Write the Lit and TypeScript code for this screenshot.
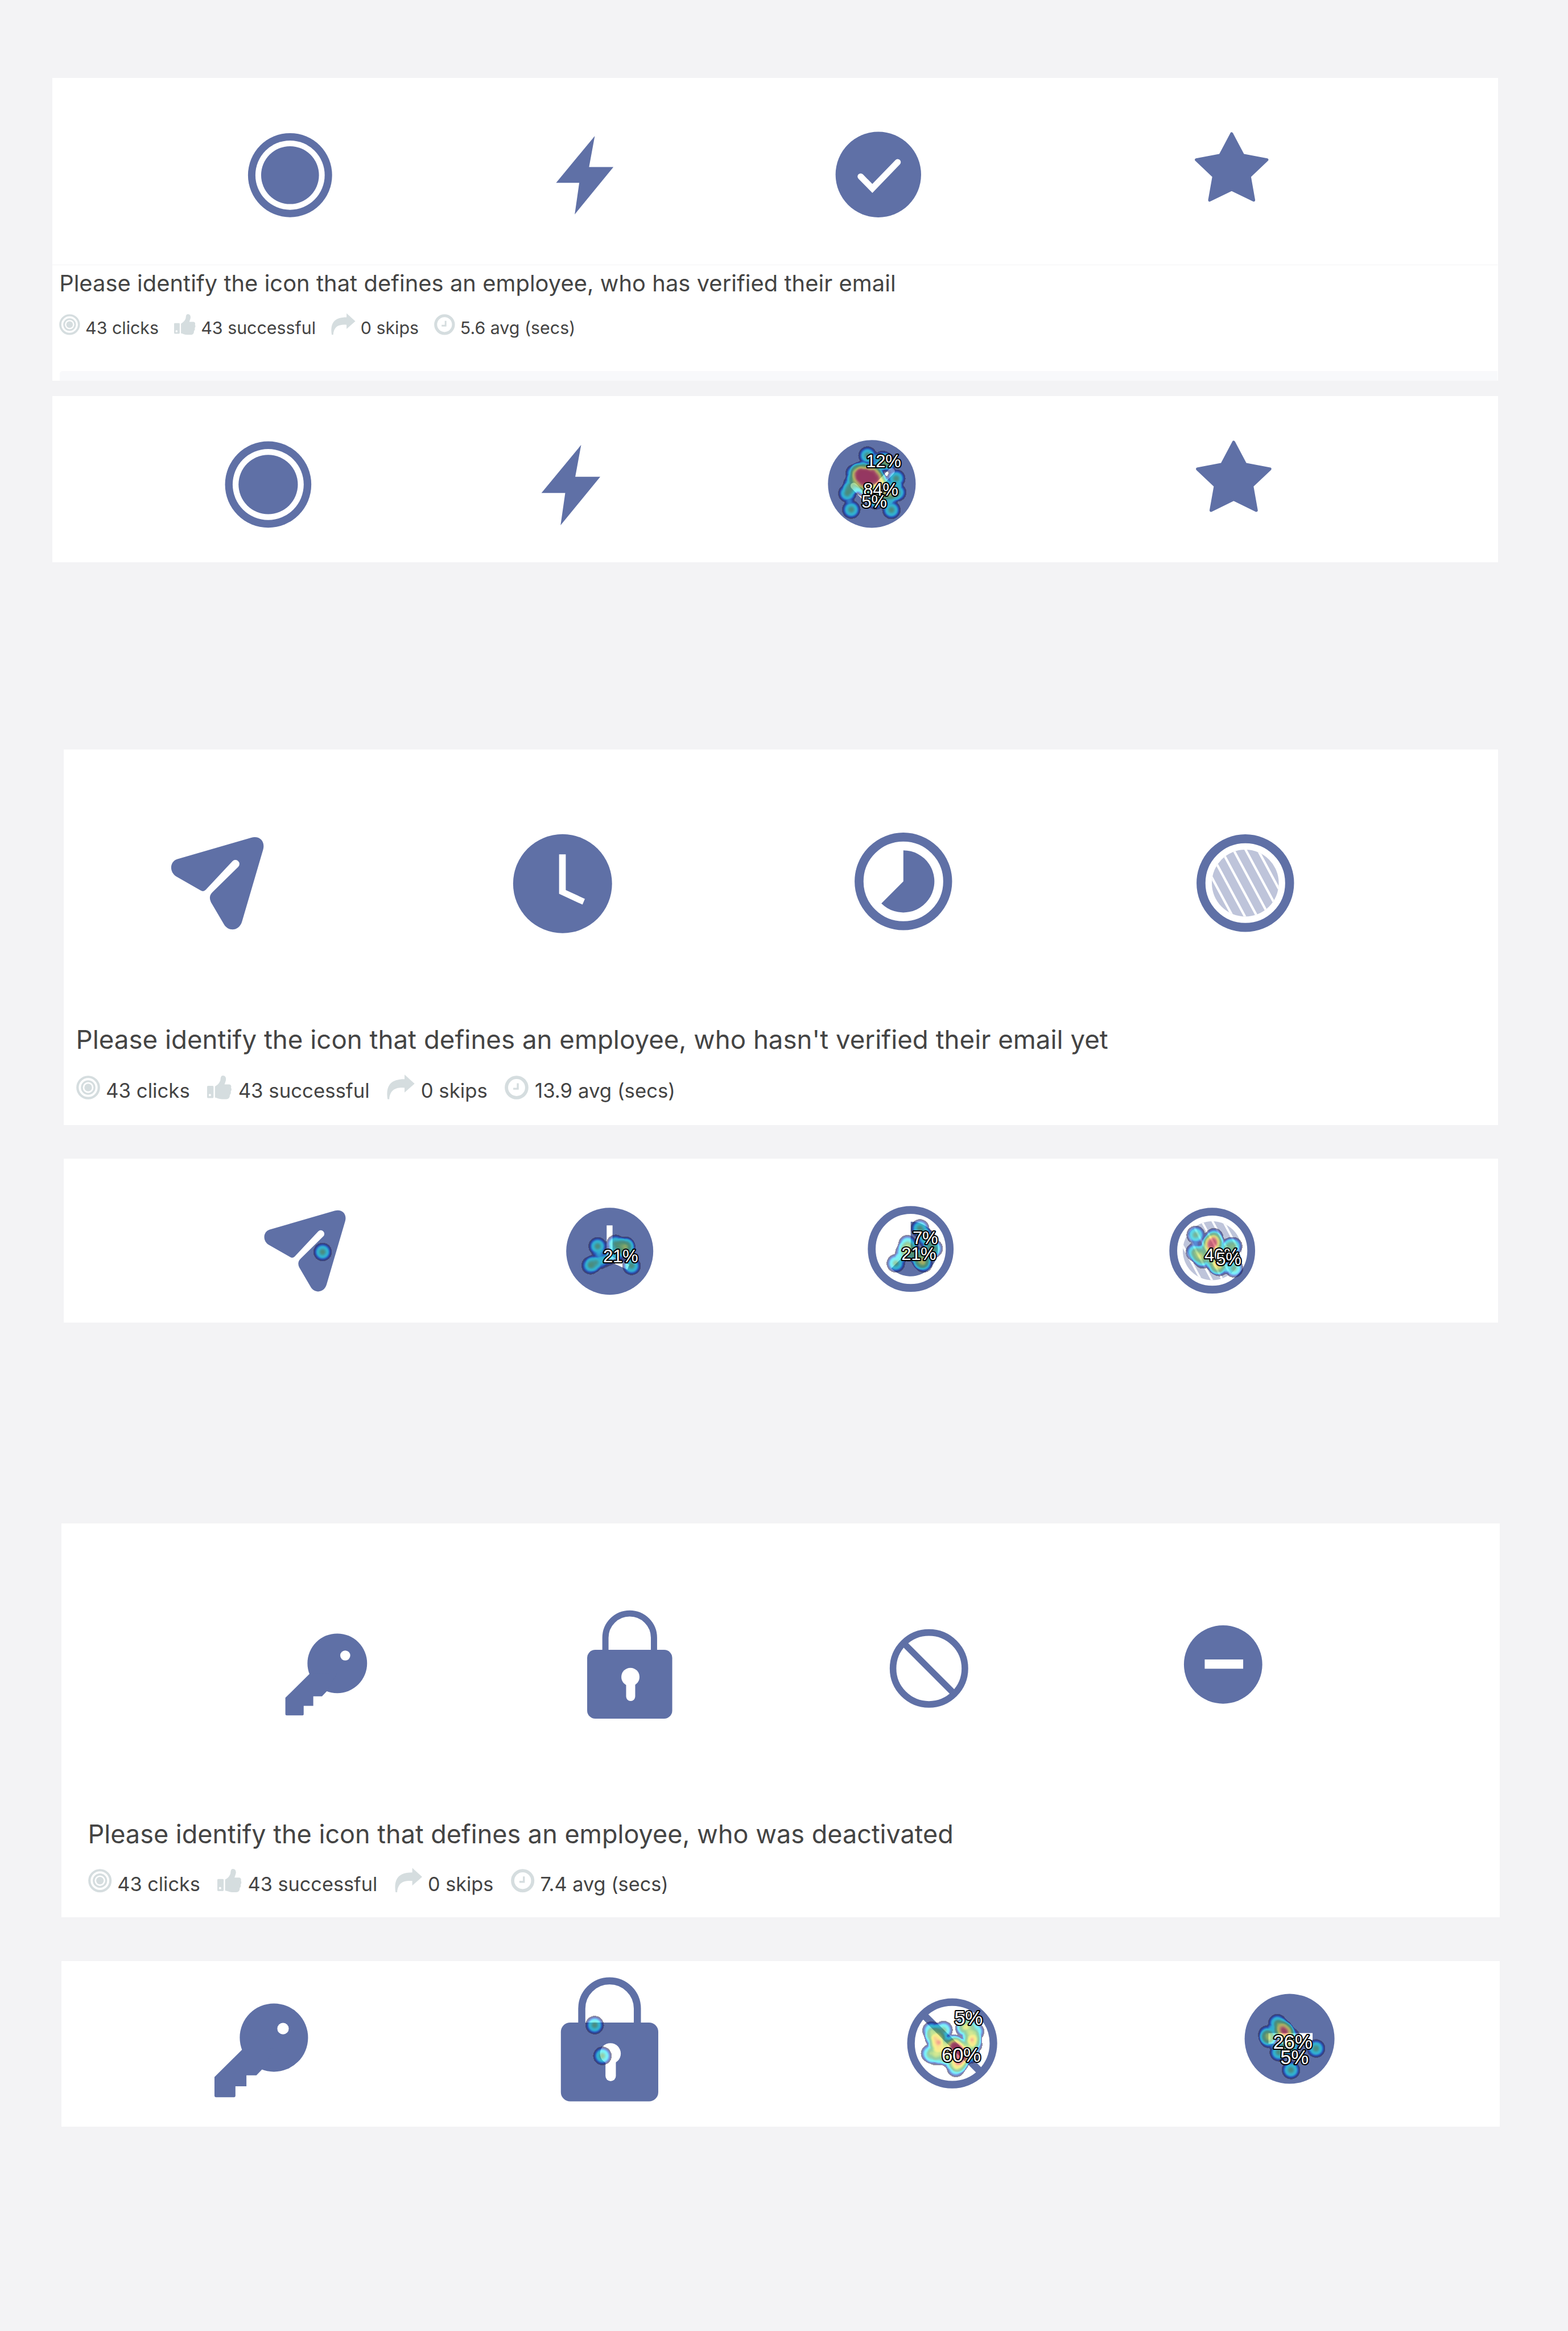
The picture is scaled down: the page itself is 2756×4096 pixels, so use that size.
import { LitElement, html, svg, css, nothing, unsafeCSS } from "lit";
import { customElement, property } from "lit/decorators.js";

// Every length is given in design units; one unit is U CSS pixels.
const U = 2756 / 3281;
const px = (n: number) => `${(n * U).toFixed(2)}px`;
const u = (n: number) => unsafeCSS(px(n));

const BLUE = "#5f70a6";

/* Icon artwork, each centred on 0,0 inside a -120..120 box. */
const ICONS = {
  disc: svg`<circle r="88" fill=${BLUE}/><circle r="72.5" fill="#fff"/><circle r="60.5" fill=${BLUE}/>`,
  bolt: svg`<path fill=${BLUE} d="M21 -82 L9 -17 H60 L-21 82 L-11.5 16 H-60 Z"/>`,
  check: svg`<circle r="89.5" fill=${BLUE}/>
    <path d="M-37 4 L-12.5 29 L40.5 -26" fill="none" stroke="#fff" stroke-width="13" stroke-linecap="round"/>`,
  star: svg`<path fill=${BLUE} stroke=${BLUE} stroke-width="6" stroke-linejoin="round"
    d="M0 -70 L23.8 -25 L74 -15.5 L37.4 19.3 L46.2 69 L0 46.6 L-46.2 69 L-37.4 19.3 L-74 -15.5 L-23.8 -25 Z"/>`,
  plane: svg`<path fill=${BLUE} d="M-84 -50 L71 -95 C88 -100 101 -88 96 -70 L52 80 C46 101 23 102 14 86 L-13 40 Q-19 28 -10 19 L44 -34 A8 8 0 0 0 32 -46 L-24 14 Q-29 19 -35 15 L-86 -14 C-101 -24 -99 -45 -84 -50 Z"/>`,
  clock: svg`<circle r="103.5" fill=${BLUE}/>
    <path fill="#fff" d="M-7.3 -61.5 H6.7 V13.3 L46.7 31.8 L41.7 43.8 L-7.3 21 Z"/>`,
  progress: svg`<circle r="92.7" fill="#fff" stroke=${BLUE} stroke-width="18.6"/>
    <path fill=${BLUE} d="M0 0 V-65 A65 65 0 1 1 -46 46 Z"/>`,
  stripes: svg`<clipPath id="stripe-disc"><circle r="70"/></clipPath>
    <circle r="92.7" fill="#fff" stroke=${BLUE} stroke-width="18.6"/>
    <circle r="70" fill="#bec4da"/>
    <g clip-path="url(#stripe-disc)" stroke="#fff" stroke-width="5">
      ${[-63.75, -38.25, -12.75, 12.75, 38.25, 63.75].map(
        (x) => svg`<path d="M${x - 43} -80 L${x + 43} 80"/>`
      )}
    </g>`,
  key: svg`<circle r="62.4" fill=${BLUE}/>
    <path fill=${BLUE} d="M-58 22 L-108.6 72 V106 Q-108.6 109 -105.6 109 H-72.5 Q-70.3 109 -70.3 106.5 V89 H-50.2 V69 H-32 L-21.5 58 L0 20 Z"/>
    <circle cx="16.7" cy="-16.4" r="10.5" fill="#fff"/>`,
  lock: svg`<path fill="none" stroke=${BLUE} stroke-width="13" d="M-50.8 -28 V-56 A50.8 50.8 0 0 1 50.8 -56 V-28"/>
    <rect x="-89" y="-30.6" width="178" height="144" rx="17" fill=${BLUE}/>
    <circle cx="1.5" cy="26" r="19" fill="#fff"/>
    <path stroke="#fff" stroke-width="19" stroke-linecap="round" d="M2 30 V67"/>`,
  ban: svg`<circle r="75.2" fill="none" stroke=${BLUE} stroke-width="13.8"/>
    <path stroke=${BLUE} stroke-width="13.4" d="M-52 -52 L52 52"/>`,
  minus: svg`<circle r="82" fill=${BLUE}/><path fill="#fff" d="M-38.5 -10.5 H42 V9 H-38.5 Z"/>`,
};

type IconName = keyof typeof ICONS;
type Point = [x: number, y: number, weight?: number];
interface Label { text: string; x: number; y: number; size?: number }
interface Item {
  icon: IconName;
  cx: number;
  cy: number;
  scale?: number;
  clicks?: Point[];
  labels?: Label[];
}

/* Click density -> colour ramp, 21 steps from 0 to 1. */
const RAMP: [number, number, number][] = [
  [60, 50, 65], [60, 50, 65], [0, 15, 125], [0, 95, 215], [5, 215, 250],
  [15, 235, 235], [30, 205, 180], [50, 175, 120], [57, 165, 86], [75, 175, 75],
  [120, 195, 60], [180, 215, 50], [235, 225, 45], [245, 215, 45], [245, 175, 50],
  [235, 110, 50], [215, 40, 45], [200, 15, 35], [195, 5, 35], [195, 5, 40], [200, 20, 60],
];
const channel = (i: number) => RAMP.map((c) => (c[i] / 255).toFixed(3)).join(" ");
const ALPHA = ["0", ...Array(20).fill("0.54")].join(" ");

@customElement("heat-icon")
class HeatIcon extends LitElement {
  static styles = css`
    :host { display: block; flex: none; }
    .art { display: block; overflow: visible; }
    .pct {
      font-family: "Liberation Sans", Arial, sans-serif;
      letter-spacing: -0.4px;
      fill: #fff;
      stroke: #000;
      stroke-width: 5px;
      stroke-linejoin: round;
      paint-order: stroke;
    }
  `;
  @property({ attribute: false }) item!: Item;

  private heat(clicks: Point[]) {
    // A weight above 1 stacks whole spots, the remainder is a fainter one.
    const spots = clicks.flatMap(([x, y, w = 1]) =>
      Array.from({ length: Math.ceil(w) }, (_, i) => ({ x, y, o: Math.min(1, w - i) }))
    );
    return svg`
      <defs>
        <radialGradient id="spot">
          <stop offset="0" stop-color="#000" stop-opacity="0.4"/>
          <stop offset="0.12" stop-color="#000" stop-opacity="0.37"/>
          <stop offset="1" stop-color="#000" stop-opacity="0"/>
        </radialGradient>
        <filter id="ramp" filterUnits="userSpaceOnUse" x="-200" y="-200" width="400" height="400"
          color-interpolation-filters="sRGB">
          <feColorMatrix in="SourceGraphic" result="level"
            values="0 0 0 1 0  0 0 0 1 0  0 0 0 1 0  0 0 0 0 1"/>
          <feComponentTransfer in="level" result="colour">
            <feFuncR type="table" tableValues=${channel(0)}/>
            <feFuncG type="table" tableValues=${channel(1)}/>
            <feFuncB type="table" tableValues=${channel(2)}/>
          </feComponentTransfer>
          <feComponentTransfer in="SourceGraphic" result="mask">
            <feFuncA type="discrete" tableValues=${ALPHA}/>
          </feComponentTransfer>
          <feComposite in="colour" in2="mask" operator="in"/>
        </filter>
      </defs>
      <g filter="url(#ramp)">
        ${spots.map(({ x, y, o }) => svg`<circle cx=${x - this.item.cx} cy=${y - this.item.cy} r="22"
          fill="url(#spot)" fill-opacity=${o}/>`)}
      </g>`;
  }

  render() {
    const { icon, cx, cy, scale = 1, clicks, labels = [] } = this.item;
    const side = 240 * scale;
    return html`<svg class="art" width=${side * U} height=${side * U}
      viewBox="${-side / 2} ${-side / 2} ${side} ${side}">
      <g transform="scale(${scale})">${ICONS[icon]}</g>
      ${clicks ? this.heat(clicks) : nothing}
      ${labels.map((l) => svg`<text class="pct" x=${l.x - cx} y=${l.y - cy} font-size=${l.size ?? 37}>${l.text}</text>`)}
    </svg>`;
  }
}

/* A row of icons in flow: each gap is the distance from the previous icon's box. */
@customElement("icon-row")
class IconRow extends LitElement {
  static styles = css`
    :host { display: flex; align-items: flex-start; box-sizing: border-box; }
  `;
  @property({ attribute: false }) items: Item[] = [];
  @property({ attribute: false }) origin: [number, number] = [0, 0];

  render() {
    let edge = this.origin[0];
    return this.items.map((item) => {
      const half = 120 * (item.scale ?? 1);
      const gap = item.cx - half - edge;
      const drop = item.cy - half - this.origin[1];
      edge = item.cx + half;
      return html`<heat-icon .item=${item} style="margin:${px(drop)} 0 0 ${px(gap)}"></heat-icon>`;
    });
  }
}

const GREY = "#d5dddf";
const STAT_ICONS = {
  clicks: svg`<g fill="none" stroke=${GREY}><circle cx="25" cy="25" r="22.3" stroke-width="5"/>
    <circle cx="25" cy="25" r="13.2" stroke-width="4"/></g><circle cx="25" cy="25" r="8" fill=${GREY}/>`,
  thumb: svg`<g fill=${GREY}><path fill-rule="evenodd" d="M2 21.5 H11.5 Q13.5 21.5 13.5 23.5 V45 Q13.5 47 11.5 47 H2 Q0 47 0 45 V23.5 Q0 21.5 2 21.5 Z M5.8 38.5 a2.4 2.4 0 1 0 .1 0 Z"/>
    <path d="M16.5 24 Q16.5 21.5 19 21 C23 19 27 14 28 9 C28.5 4 29 0 33 0 C39 0 40.5 6 39 11 L36.5 18.5 H46 C50 18.5 51.5 22.5 50 25.5 C52 28 51 31.5 49.5 33 C50.5 36 49.5 39 47.5 40.5 C48 44.5 46 49.5 40 49.5 H31 C25 49.5 21 46.5 16.5 46 Z"/></g>`,
  skip: svg`<path fill=${GREY} d="M1.5 51.5 C-3 22 9 9.5 37 9.5 V0 L58 19 L37 37.5 V27.5 C19 26 6.5 31 5 51.5 Z"/>`,
  time: svg`<g fill="none" stroke=${GREY}><circle cx="25" cy="25" r="21.3" stroke-width="7"/>
    <path stroke-width="4" d="M27.5 16 V27.5 H18"/></g>`,
};
const stat = (name: keyof typeof STAT_ICONS, text: string, w = 50, top = 0) => ({ name, text, w, top });

@customElement("stat-line")
class StatLine extends LitElement {
  static styles = css`
    :host { display: flex; align-items: flex-start; gap: 0.87em; white-space: nowrap; }
    .stat { display: flex; align-items: flex-start; gap: 0.3em; }
    .glyph { display: block; height: 1.19em; flex: none; overflow: visible; }
    .label { font-size: 0.985em; line-height: 1.2em; padding-top: 0.19em; }
  `;
  @property() average = "";
  render() {
    const stats = [
      stat("clicks", "43 clicks"),
      stat("thumb", "43 successful", 52),
      stat("skip", "0 skips", 58, -2),
      stat("time", `${this.average} avg (secs)`),
    ];
    return stats.map((s) => html`<div class="stat">
      <svg class="glyph" viewBox="0 ${-s.top} ${s.w} 50">${STAT_ICONS[s.name]}</svg>
      <span class="label">${s.text}</span>
    </div>`);
  }
}

const VERIFIED: Item[] = [
  { icon: "disc", cx: 606.8, cy: 366 },
  { icon: "bolt", cx: 1223.5, cy: 366.6 },
  { icon: "check", cx: 1838, cy: 364.8 },
  { icon: "star", cx: 2577.1, cy: 350 },
];
const VERIFIED_HEAT: Item[] = [
  { icon: "disc", cx: 561, cy: 1013.9, scale: 1.0255 },
  { icon: "bolt", cx: 1194, cy: 1014.5, scale: 1.0255 },
  {
    icon: "check", cx: 1824, cy: 1012.3, scale: 1.0255,
    clicks: [
      [1781, 1066], [1865, 1066.7], [1815, 953], [1847, 962], [1857, 968], [1875, 1001], [1877, 1030], [1864, 1033, 0.7],
      [1772.7, 1032], [1783, 1013], [1788, 990], [1800, 986, 2], [1803, 1000, 2], [1811, 1005, 2], [1823, 993, 2],
      [1832, 1001, 2], [1817, 1013], [1839, 1009, 1.5], [1849, 1023, 1.5], [1853, 1036], [1833, 1027], [1811, 990, 2],
      [1832, 1047], [1797, 1000], [1829, 985], [1808, 1020],
    ],
    labels: [
      { text: "12%", x: 1812, y: 977 },
      { text: "84%", x: 1806, y: 1037 },
      { text: "5%", x: 1802.5, y: 1062 },
    ],
  },
  { icon: "star", cx: 2582, cy: 997.5, scale: 1.0255 },
];
const UNVERIFIED: Item[] = [
  { icon: "plane", cx: 455, cy: 1848 },
  { icon: "clock", cx: 1177.3, cy: 1848.7 },
  { icon: "progress", cx: 1890.3, cy: 1844 },
  { icon: "stripes", cx: 2605.2, cy: 1847 },
];
const UNVERIFIED_HEAT: Item[] = [
  { icon: "plane", cx: 637.2, cy: 2616.8, scale: 0.88, clicks: [[674.5, 2619.5]] },
  {
    icon: "clock", cx: 1275.3, cy: 2617.4, scale: 0.88,
    clicks: [
      [1250, 2607], [1287.7, 2602], [1309, 2606], [1309, 2611, 0.6], [1235, 2647, 0.9], [1247, 2640, 0.5],
      [1263.5, 2635, 0.5], [1282, 2627, 0.5], [1321, 2648], [1300, 2620, 0.4],
    ],
    labels: [{ text: "21%", x: 1261.5, y: 2640.5 }],
  },
  {
    icon: "progress", cx: 1905.1, cy: 2613, scale: 0.88,
    clicks: [
      [1924.5, 2570], [1938, 2590], [1953, 2612], [1898.5, 2603], [1892, 2620], [1874, 2643],
      [1907.5, 2620], [1926, 2635, 1.4], [1932, 2643], [1944, 2618, 0.6],
    ],
    labels: [
      { text: "7%", x: 1909, y: 2603 },
      { text: "21%", x: 1885.5, y: 2636.5 },
    ],
  },
  {
    icon: "stripes", cx: 2536.2, cy: 2616, scale: 0.88,
    clicks: [
      [2501.7, 2583], [2540, 2588], [2535, 2604, 2], [2530, 2608], [2539, 2598, 2], [2500, 2619], [2511.7, 2627],
      [2517, 2635, 0.8], [2545, 2645, 1.5], [2551, 2650], [2580, 2606.7], [2568, 2608, 0.6], [2581.7, 2653],
      [2540, 2628], [2558, 2623, 0.6],
    ],
    labels: [
      { text: "40%", x: 2520, y: 2638 },
      { text: "5%", x: 2544, y: 2646.5 },
    ],
  },
];
const DEACTIVATED: Item[] = [
  { icon: "key", cx: 706, cy: 3479.5 },
  { icon: "lock", cx: 1317.8, cy: 3482.3 },
  { icon: "ban", cx: 1944.3, cy: 3490.6 },
  { icon: "minus", cx: 2559.5, cy: 3481.8 },
];
const DEACTIVATED_HEAT: Item[] = [
  { icon: "key", cx: 572.9, cy: 4262.6, scale: 1.145 },
  { icon: "lock", cx: 1275.1, cy: 4265.6, scale: 1.145, clicks: [[1243.9, 4236], [1260, 4300.3]] },
  {
    icon: "ban", cx: 1992.2, cy: 4274.8, scale: 1.147,
    clicks: [
      [1949, 4248], [1955, 4263, 1.5], [1965, 4273, 2], [1974, 4247], [1946, 4296], [1962, 4285], [1971, 4300],
      [1985, 4288], [1996, 4277, 2], [2002, 4283, 2], [2000, 4292], [2012.6, 4293, 2], [2010, 4300, 2],
      [2033, 4267, 2], [2036, 4277], [2022, 4237], [2018, 4243], [2040, 4250], [2000, 4326], [2006, 4315, 2],
      [2012, 4306], [2030, 4298], [1988, 4308], [1957, 4303, 0.6],
    ],
    labels: [
      { text: "5%", x: 1996.5, y: 4236.5, size: 41.5 },
      { text: "60%", x: 1970, y: 4313, size: 41.5 },
    ],
  },
  {
    icon: "minus", cx: 2698.6, cy: 4264.8, scale: 1.147,
    clicks: [
      [2673, 4232], [2684, 4243], [2687, 4249, 2], [2690, 4252], [2652, 4256], [2655, 4265], [2676, 4293], [2698, 4277],
      [2696, 4280], [2754, 4285], [2701.5, 4330], [2702, 4260, 0.7],
    ],
    labels: [
      { text: "26%", x: 2664, y: 4286, size: 41.5 },
      { text: "5%", x: 2679, y: 4318, size: 41.5 },
    ],
  },
];

@customElement("app-root")
class AppRoot extends LitElement {
  static styles = css`
    :host {
      display: flex; flex-direction: column; align-items: flex-start; box-sizing: border-box;
      width: 100vw; height: 100vh; overflow: hidden;
      padding-top: ${u(163)};
      background: #f3f3f5; color: #444;
      font-family: Inter, Roboto, sans-serif;
    }
    .panel { background: #fff; flex: none; overflow: hidden; }
    .first { margin-left: ${u(110)}; width: ${u(3024)}; font-size: ${u(36.7)}; }
    .second { margin-left: ${u(133)}; width: ${u(3001)}; font-size: ${u(42)}; }
    .third { margin-left: ${u(129)}; width: ${u(3009)}; font-size: ${u(41.4)}; }
    .question { margin: 0; font-size: 1.294em; line-height: 1.197em; font-weight: 400; white-space: nowrap; }

    .first .icons { height: ${u(391)}; }
    .first.task { height: ${u(634)}; display: flex; flex-direction: column; }
    .first .body { border-top: ${u(2)} solid #f4f4f6; margin-right: ${u(1)}; padding: ${u(9)} 0 0 ${u(14)}; height: ${u(221)}; box-sizing: border-box; }
    .first .question { letter-spacing: 0.001em; }
    .first .stats { margin-top: ${u(36.5)}; }
    .strip { height: ${u(21)}; margin: auto ${u(1)} 0 ${u(15)}; background: #f8f9fb; border-radius: ${u(6)} 0 0 0; }
    .first.heat { height: ${u(347.5)}; margin-top: ${u(31.5)}; }

    .second.task { height: ${u(785)}; margin-top: ${u(392.5)}; }
    .second .icons { height: ${u(575)}; }
    .second .body { padding-left: ${u(26)}; }
    .second .stats { margin-top: ${u(41)}; }
    .second.heat { height: ${u(342)}; margin-top: ${u(71)}; }

    .third.task { height: ${u(824)}; margin-top: ${u(420)}; }
    .third .icons { height: ${u(618)}; }
    .third .body { padding-left: ${u(55)}; }
    .third .stats { margin-top: ${u(41)}; }
    .third.heat { height: ${u(347)}; margin-top: ${u(92)}; }
  `;

  render() {
    return html`
      <section class="panel first task">
        <icon-row class="icons" .items=${VERIFIED} .origin=${[110, 163]}></icon-row>
        <div class="body">
          <h2 class="question">Please identify the icon that defines an employee, who has verified their email</h2>
          <stat-line class="stats" average="5.6"></stat-line>
        </div>
        <div class="strip"></div>
      </section>
      <section class="panel first heat">
        <icon-row .items=${VERIFIED_HEAT} .origin=${[110, 828.5]}></icon-row>
      </section>

      <section class="panel second task">
        <icon-row class="icons" .items=${UNVERIFIED} .origin=${[133, 1568.5]}></icon-row>
        <div class="body">
          <h2 class="question">Please identify the icon that defines an employee, who hasn't verified their email yet</h2>
          <stat-line class="stats" average="13.9"></stat-line>
        </div>
      </section>
      <section class="panel second heat">
        <icon-row .items=${UNVERIFIED_HEAT} .origin=${[133, 2424.5]}></icon-row>
      </section>

      <section class="panel third task">
        <icon-row class="icons" .items=${DEACTIVATED} .origin=${[129, 3186.5]}></icon-row>
        <div class="body">
          <h2 class="question">Please identify the icon that defines an employee, who was deactivated</h2>
          <stat-line class="stats" average="7.4"></stat-line>
        </div>
      </section>
      <section class="panel third heat">
        <icon-row .items=${DEACTIVATED_HEAT} .origin=${[129, 4102.5]}></icon-row>
      </section>
    `;
  }
}
